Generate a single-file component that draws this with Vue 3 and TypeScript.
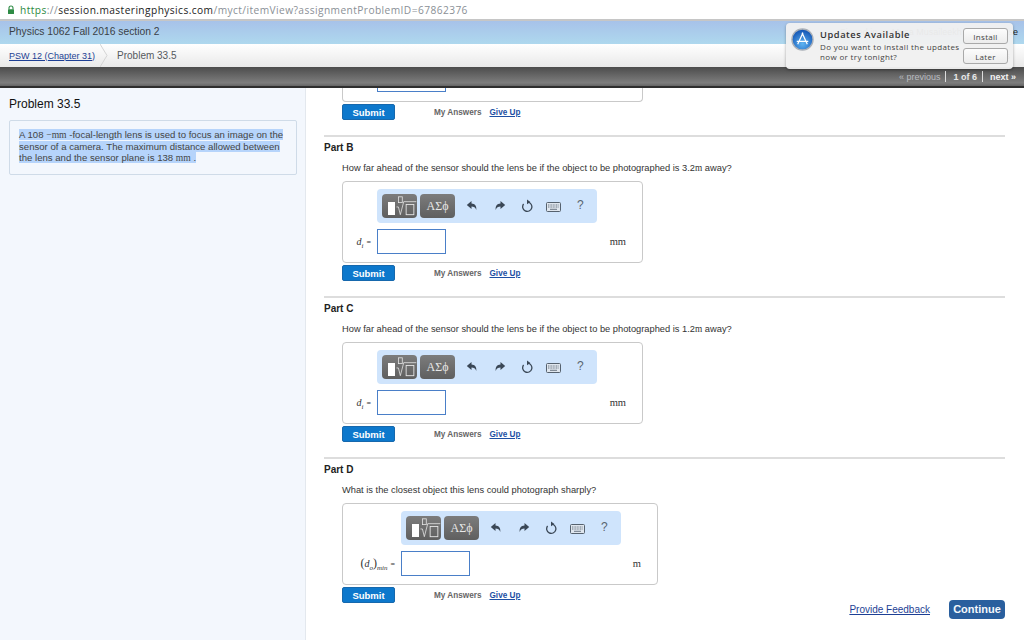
<script setup lang="ts">
interface Part {
  name: string
  question: string
  unit: string
  wide: boolean
  label: string
  sub: string
  paren: boolean
}
const parts: Part[] = [
  { name: 'Part B', question: 'How far ahead of the sensor should the lens be if the object to be photographed is 3.2', unit: 'mm', wide: false, label: 'd', sub: 'i', paren: false },
  { name: 'Part C', question: 'How far ahead of the sensor should the lens be if the object to be photographed is 1.2', unit: 'mm', wide: false, label: 'd', sub: 'i', paren: false },
  { name: 'Part D', question: 'What is the closest object this lens could photograph sharply?', unit: 'm', wide: true, label: 'd', sub: 'min', paren: true },
]
</script>

<template>
  <div class="page">
    <div class="urlbar">
      <svg class="lock" viewBox="0 0 8 10" width="8" height="10"><path d="M2 4.5V3a2 2 0 0 1 4 0v1.5" fill="none" stroke="#2e8b45" stroke-width="1.1"/><rect x="1" y="4.2" width="6" height="4.8" rx=".6" fill="#2e8b45"/></svg>
      <span class="url"><span class="https">https</span><span class="dim">://</span><span class="host">session.masteringphysics.com</span><span class="dim">/myct/itemView?assignmentProblemID=67862376</span></span>
    </div>
    <header class="course">
      <span>Physics 1062 Fall 2016 section 2</span>
      <span class="signed">Signed in as Musa Musaileekh | Help | Close</span>
    </header>
    <nav class="crumbs">
      <a class="crumb-link">PSW 12 (Chapter 31)</a>
      <svg class="chevron" viewBox="0 0 8 23" width="8" height="23"><path d="M0 0L7 11.5L0 23" fill="none" stroke="#d4d4d4"/></svg>
      <span class="crumb-now">Problem 33.5</span>
      <span class="resources">Resources</span>
    </nav>
    <div class="pager">
      <span class="prev">« previous</span><i></i><b>1 of 6</b><i></i><b class="next">next »</b>
    </div>

    <div class="body">
      <aside class="side">
        <h1>Problem 33.5</h1>
        <div class="statement">
          <span class="sel">A 108 <span class="math">−mm</span> -focal-length lens is used to focus an image on the sensor of a camera. The maximum distance allowed between the lens and the sensor plane is 138 <span class="math">mm</span> .</span>
        </div>
      </aside>

      <main class="main">
        <div class="stub">
          <div class="answer stub-box"><div class="stub-input"></div></div>
          <div class="actions">
            <button class="submit">Submit</button>
            <span class="mine">My Answers</span><a class="giveup">Give Up</a>
          </div>
        </div>

        <section v-for="p in parts" :key="p.name" class="part">
          <h2>{{ p.name }}</h2>
          <p class="question">{{ p.question }}<template v-if="p.unit === 'mm'"> <span class="math">m</span> away?</template></p>
          <div class="answer" :class="{ wide: p.wide }">
            <div class="toolbar">
              <span class="tool tpl">
                <span class="block"></span>
                <svg viewBox="0 0 22 20" width="22" height="20"><rect x="2.5" y=".5" width="4" height="6" fill="none" stroke="#e8e8e8" stroke-width=".8"/><path d="M.5 11h2l2 8L8 5.5h13" fill="none" stroke="#e8e8e8" stroke-width=".8"/><rect x="10.5" y="8.5" width="8" height="10.5" fill="none" stroke="#e8e8e8" stroke-width=".9"/></svg>
              </span>
              <span class="tool sym">ΑΣϕ</span>
              <svg class="ico undo" viewBox="0 0 12 12" width="12" height="12"><path d="M5.5 1L.8 5l4.7 4V6.4c2.4 0 3.9.8 4.8 3.6.5-3.8-1.400-6.200-4.800-6.400z" fill="#3a4756"/></svg>
              <svg class="ico redo" viewBox="0 0 12 12" width="12" height="12"><path d="M6.500 1l4.700 4-4.700 4V6.400c-2.400 0-3.900.8-4.800 3.600-.5-3.800 1.400-6.200 4.800-6.400z" fill="#3a4756"/></svg>
              <svg class="ico reset" viewBox="0 0 12 14" width="12" height="14"><path d="M6.800 3.200A4.600 4.600 0 1 1 2.600 5" fill="none" stroke="#3a4756" stroke-width="1.300"/><path d="M6 .4l3.400 2.700L6 5.300z" fill="#3a4756"/></svg>
              <svg class="ico kbd" viewBox="0 0 15 10" width="15" height="10"><rect x=".5" y=".5" width="14" height="9" rx="1" fill="#dfe6ee" stroke="#55616e"/><path d="M2 3h11M2 5h11" stroke="#6b7683" stroke-dasharray="1 .6"/><path d="M4 7.300h7" stroke="#6b7683"/></svg>
              <span class="help">?</span>
            </div>
            <div class="row">
              <span class="var">
                <template v-if="p.paren"><span class="up">(</span></template><i>d</i><sub><i>{{ p.paren ? 'o' : p.sub }}</i></sub><template v-if="p.paren"><span class="up">)</span><sub><i>{{ p.sub }}</i></sub></template>
                <span class="eq">=</span>
              </span>
              <div class="input"></div>
              <span class="unit">{{ p.unit }}</span>
            </div>
          </div>
          <div class="actions">
            <button class="submit">Submit</button>
            <span class="mine">My Answers</span><a class="giveup">Give Up</a>
          </div>
        </section>

        <footer class="foot">
          <a class="feedback">Provide Feedback</a>
          <button class="continue">Continue</button>
        </footer>
      </main>
    </div>

    <div class="notice">
      <svg class="appstore" viewBox="0 0 24 24" width="23" height="23">
        <defs><radialGradient id="as" cx=".5" cy=".7" r=".7"><stop offset="0" stop-color="#5fb4f2"/><stop offset="1" stop-color="#0d4eb0"/></radialGradient></defs>
        <circle cx="12" cy="12" r="11" fill="url(#as)" stroke="#aab0b8" stroke-width="1.400"/>
        <path d="M12.500 5L7 17M11.500 5L17 17M6 14h12" stroke="#fff" stroke-width="1.300" fill="none"/>
      </svg>
      <div class="notice-text">
        <strong>Updates Available</strong>
        <span>Do you want to install the updates<br />now or try tonight?</span>
      </div>
      <div class="notice-btns">
        <button>Install</button>
        <button>Later</button>
      </div>
    </div>
  </div>
</template>

<style>
html, body { margin: 0; }
</style>

<style scoped>
.page {
  position: relative;
  width: 1024px;
  height: 640px;
  overflow: hidden;
  background: #fff;
  font-family: "Liberation Sans", Arial, sans-serif;
  color: #333;
}
.urlbar {
  height: 19px;
  display: flex;
  align-items: center;
  gap: 5px;
  padding-left: 7px;
  background: #fff;
  border-bottom: 2px solid #c6c6c6;
}
.lock { flex: none; }
.url { font-family: "Open Sans", sans-serif; font-size: 10.2px; letter-spacing: .42px; color: #8a8f96; white-space: nowrap; }
.https { color: #2c8a3e; }
.host { color: #222; }
.course {
  height: 23px;
  display: flex;
  justify-content: space-between;
  align-items: center;
  padding: 0 0 2px 9px;
  box-sizing: border-box;
  background: linear-gradient(#a7c2e9, #aed8ee);
  font-size: 10.3px;
  color: #3a3f45;
  white-space: nowrap;
}
.signed { font-size: 9px; margin-right: 6px; color: #222; }
.crumbs {
  height: 23px;
  display: flex;
  align-items: center;
  padding-left: 9px;
  background: linear-gradient(#fff, #e9e9e9);
  font-size: 9px;
}
.crumb-link { color: #1d3f94; text-decoration: underline; }
.chevron { margin-left: 5px; flex: none; }
.crumb-now { margin-left: 9px; font-size: 10px; color: #55595e; }
.resources { margin-left: auto; margin-right: 14px; font-size: 9px; color: #333; }
.pager {
  height: 21px;
  box-sizing: border-box;
  display: flex;
  align-items: center;
  justify-content: flex-end;
  padding: 0 8px 2px 0;
  background: linear-gradient(#4c4c4c, #7d7d7d 75%, #6a6a6a 88%, #2e2e2e 92%, #2e2e2e);
  font-size: 9px;
  color: #e8e8e8;
}
.pager .prev { color: #b9bcc0; }
.pager i { width: 1px; height: 11px; background: #ddd; margin: 0 7px 0 5px; }
.pager b { font-weight: 700; }
.pager .next { color: #f2f2f2; }
.body { display: flex; height: 552px; }
.side {
  width: 306px;
  flex: none;
  box-sizing: border-box;
  padding: 8px 9px 0;
  background: #f3f7fd;
  border-right: 1px solid #e3e8ee;
}
.side h1 { margin: 0; font-size: 12px; line-height: 16px; font-weight: 400; color: #111; }
.statement {
  margin-top: 8px;
  width: 288px;
  height: 55px;
  box-sizing: border-box;
  padding: 8px 9px;
  border: 1px solid #cfdbe8;
  border-radius: 2px;
  background: #f3f7fd;
  font-size: 9.6px;
  line-height: 11.5px;
  color: #444;
}
.sel { background: #b6d4fb; }
.math { font-family: "Liberation Serif", serif; }
.main { flex: 1; min-width: 0; padding: 0 19px 0 18px; }
.stub { height: 47px; padding-left: 18px; }
.answer {
  position: relative;
  width: 301px;
  height: 82px;
  box-sizing: border-box;
  border: 1px solid #c9c9c9;
  border-radius: 4px;
  padding: 7px 0 0 34px;
  background: #fff;
}
.answer.wide { width: 316px; padding-left: 58px; }
.stub-box { height: 14px; border-top: 0; border-radius: 0 0 4px 4px; padding-top: 0; }
.stub-input { width: 69px; height: 4px; box-sizing: border-box; border: 1px solid #4a7fc8; border-top: 0; }
.actions { display: flex; align-items: center; height: 16px; margin-top: 2px; }
.submit {
  width: 53px;
  height: 16px;
  padding: 0;
  border: 1px solid #1668ad;
  border-radius: 2px;
  background: #0d78cc;
  color: #fff;
  font: 700 9.5px "Liberation Sans", Arial, sans-serif;
}
.mine { margin-left: 39px; font-size: 8.2px; font-weight: 700; color: #666; }
.giveup { margin-left: 8px; font-size: 8.2px; font-weight: 700; color: #1d4fa3; text-decoration: underline; }
.part { height: 161px; box-sizing: border-box; border-top: 2px solid #ddd; }
.part h2 { margin: 5px 0 0; font-size: 10px; line-height: 12px; font-weight: 700; color: #222; }
.part .question { margin: 8px 0 0 18px; font-size: 9.3px; line-height: 12px; color: #333; }
.part .answer { margin: 7px 0 0 18px; }
.part .actions { margin-left: 18px; }
.toolbar {
  position: relative;
  width: 220px;
  height: 34px;
  border-radius: 4px;
  background: #cfe4fc;
}
.tool {
  position: absolute;
  top: 5px;
  height: 24px;
  box-sizing: border-box;
  border-radius: 4px;
  background: linear-gradient(#7c7c7c, #5f5f5f);
  color: #e8e8e8;
}
.tpl { left: 5px; width: 35px; display: flex; align-items: center; padding-left: 6px; gap: 1px; }
.block { width: 7px; height: 13px; margin-top: 5px; background: #fff; }
.sym { left: 43px; width: 35px; text-align: center; line-height: 24px; font: 12px/24px "Liberation Serif", serif; }
.ico { position: absolute; }
.undo { left: 89px; top: 11px; }
.redo { left: 117px; top: 11px; }
.reset { left: 144px; top: 10px; }
.kbd { left: 169px; top: 13px; }
.help { position: absolute; left: 200px; top: 9px; font-size: 12px; line-height: 14px; color: #5a6570; }
.row { position: relative; display: flex; align-items: center; margin-top: 6px; height: 25px; }
.var {
  position: absolute;
  right: 100%;
  margin-right: 6px;
  white-space: nowrap;
  font-family: "Liberation Serif", serif;
  font-size: 10px;
  color: #333;
}
.var sub { font-size: 7px; line-height: 0; }
.up { font-size: 12px; }
.eq { margin-left: 3px; font-size: 8px; }
.input {
  width: 69px;
  height: 25px;
  box-sizing: border-box;
  border: 1px solid #4a7fc8;
  background: #fff;
}
.unit {
  position: absolute;
  right: 16px;
  font-family: "Liberation Serif", serif;
  font-size: 10.5px;
  color: #333;
}
.answer .row { width: calc(100% + 0px); }
.answer:not(.wide) .unit { right: 16px; }
.foot { display: flex; justify-content: flex-end; align-items: center; margin-top: -19px; height: 20px; }
.feedback { font-size: 10px; color: #1d3f94; text-decoration: underline; margin-right: 19px; }
.continue {
  width: 56px;
  height: 19px;
  padding: 0;
  border: 0;
  border-radius: 4px;
  background: #2a5f9e;
  color: #f4f7fb;
  font: 700 11px "Liberation Sans", Arial, sans-serif;
}
.notice {
  position: absolute;
  left: 786px;
  top: 23px;
  width: 227px;
  height: 46px;
  box-sizing: border-box;
  display: flex;
  align-items: flex-start;
  border-radius: 4px;
  background: rgba(240, 240, 240, .96);
  box-shadow: 0 1px 3px rgba(0, 0, 0, .35);
}
.appstore { flex: none; margin: 5px 0 0 5px; }
.notice-text { margin: 5px 0 0 6px; display: flex; flex-direction: column; font-family: "Open Sans", sans-serif; color: #444; white-space: nowrap; }
.notice-text strong { font-size: 9.300px; line-height: 13px; letter-spacing: .55px; font-weight: 600; color: #333; }
.notice-text span { margin-top: 1px; font-size: 8px; line-height: 10px; letter-spacing: .35px; }
.notice-btns { position: absolute; left: 177px; top: 5px; display: flex; flex-direction: column; gap: 4px; }
.notice-btns button {
  width: 45px;
  height: 16px;
  padding: 0;
  box-sizing: border-box;
  border: 1px solid #a9a9a9;
  border-radius: 3px;
  background: linear-gradient(#fcfcfc, #ececec);
  color: #444;
  font: 8px "Open Sans", sans-serif;
  letter-spacing: .3px;
}
</style>
